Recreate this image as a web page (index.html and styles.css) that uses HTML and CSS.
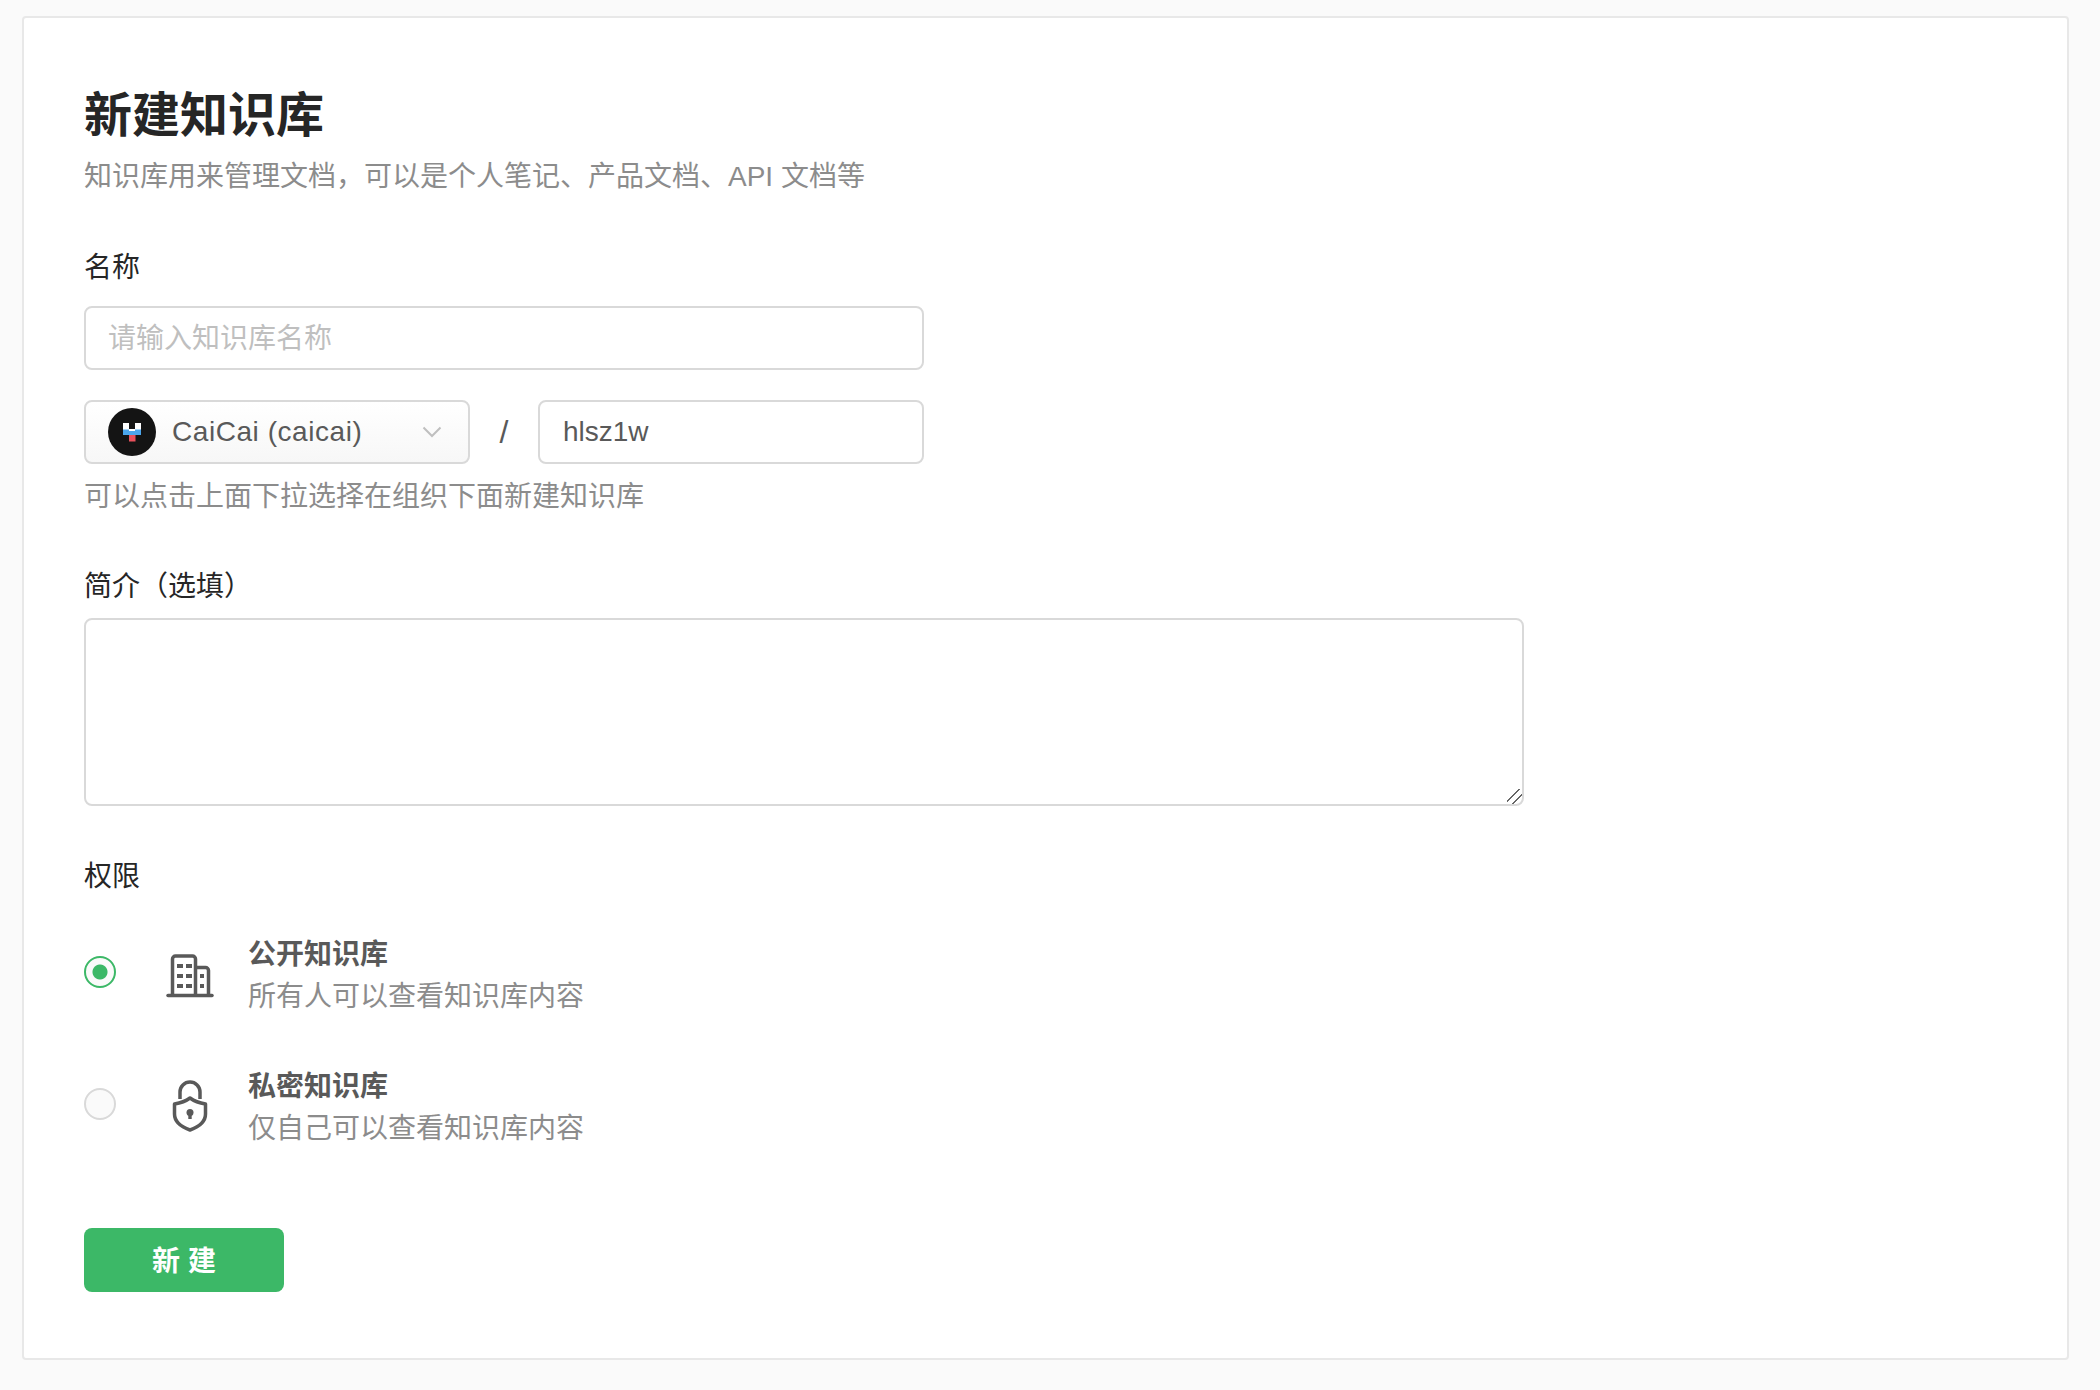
FILE: index.html
```html
<!DOCTYPE html>
<html lang="zh-CN">
<head>
    <meta charset="UTF-8">
    <title>新建知识库</title>
    <link rel="stylesheet" href="styles.css">
</head>
<body>
    <div class="card">
        <h1 class="title">新建知识库</h1>
        <p class="subtitle">知识库用来管理文档，可以是个人笔记、产品文档、API 文档等</p>

        <form class="form">
            <label class="label label-name" for="name">名称</label>
            <input class="input input-name" type="text" id="name" placeholder="请输入知识库名称">

            <div class="path-row">
                <div class="owner-select">
                    <span class="avatar">
                        <svg width="48" height="48" viewBox="0 0 48 48">
                            <circle cx="24" cy="24" r="24" fill="#141414"/>
                            <path d="M15 15h6v6h6v-6h6v8h-18z" fill="#fff"/>
                            <rect x="15" y="21.500" width="6" height="5.500" fill="#4ba6ec"/>
                            <rect x="21" y="23" width="6" height="4" fill="#4ba6ec"/>
                            <rect x="27" y="21.500" width="6" height="5.500" fill="#4ba6ec"/>
                            <rect x="21" y="27" width="6.500" height="6.500" fill="#e8505b"/>
                        </svg>
                    </span>
                    <span class="owner-name">CaiCai (caicai)</span>
                    <svg class="caret" width="20" height="12" viewBox="0 0 20 12">
                        <path d="M1.500 1.500 10 10l8.500-8.500" fill="none" stroke="#bfbfbf" stroke-width="2"/>
                    </svg>
                </div>
                <span class="slash">/</span>
                <input class="input input-slug" type="text" value="hlsz1w">
            </div>
            <p class="hint">可以点击上面下拉选择在组织下面新建知识库</p>

            <label class="label label-desc" for="desc">简介（选填）</label>
            <textarea class="textarea" id="desc"></textarea>

            <div class="label label-perm">权限</div>

            <div class="perm-row perm-public">
                <span class="radio radio-on"></span>
                <svg class="perm-icon icon-building" width="48" height="48" viewBox="0 0 48 48" fill="none" stroke="#595959" stroke-width="3.500">
                    <path d="M2 44.500h44" stroke-linecap="round"/>
                    <path d="M6.500 44V8a3 3 0 0 1 3-3h17a3 3 0 0 1 3 3v36"/>
                    <path d="M29.500 16.500h10a3 3 0 0 1 3 3V44"/>
                    <path d="M11 15h6M20 15h6M11 25h6M20 25h6M11 35h6M20 35h6M34 25h4M34 35h4" stroke-width="4"/>
                </svg>
                <div class="perm-text">
                    <div class="perm-title">公开知识库</div>
                    <div class="perm-desc">所有人可以查看知识库内容</div>
                </div>
            </div>

            <div class="perm-row perm-private">
                <span class="radio radio-off"></span>
                <svg class="perm-icon icon-lock" width="48" height="54" viewBox="0 0 48 54" fill="none" stroke="#595959" stroke-width="3.500">
                    <path d="M14 20v-7a10 10 0 0 1 20 0v7"/>
                    <path d="M24 19c4 3 9 5 15.500 6v10c0 8-7 13-15.500 16-8.500-3-15.500-8-15.500-16V25c6.500-1 11.500-3 15.500-6z" stroke-linejoin="round"/>
                    <circle cx="24" cy="33.500" r="3.500" fill="#595959" stroke="none"/>
                    <rect x="22.300" y="34" width="3.400" height="6" fill="#595959" stroke="none"/>
                </svg>
                <div class="perm-text">
                    <div class="perm-title">私密知识库</div>
                    <div class="perm-desc">仅自己可以查看知识库内容</div>
                </div>
            </div>

            <button class="submit" type="button">新 建</button>
        </form>
    </div>
</body>
</html>
```

FILE: styles.css
```css
* {
    box-sizing: border-box;
}
body {
    margin: 0;
    height: 1390px;
    padding: 16px 31px 30px 22px;
    background-color: #fafafa;
    font-family: "Liberation Sans", "Noto Sans CJK SC", sans-serif;
    color: #262626;
    overflow: hidden;
}
.card {
    height: 1344px;
    padding: 68px 60px 0;
    background-color: #fff;
    border: 2px solid #e8e8e8;
    border-radius: 4px;
}
.title {
    margin: 0;
    font-size: 48px;
    line-height: 60px;
    font-weight: 700;
    color: #262626;
}
.subtitle {
    margin: 11px 0 0;
    font-size: 28px;
    line-height: 40px;
    color: #8c8c8c;
}
.form {
    display: flex;
    flex-direction: column;
    align-items: flex-start;
}
.label {
    display: block;
    font-size: 28px;
    line-height: 40px;
    color: #262626;
}
.label-name {
    margin-top: 51px;
}
.label-desc {
    margin-top: 50px;
}
.label-perm {
    margin-top: 51px;
}
.input {
    height: 64px;
    padding: 0 23px;
    font-family: inherit;
    font-size: 28px;
    color: #595959;
    background-color: #fff;
    border: 2px solid #d9d9d9;
    border-radius: 8px;
    outline: none;
}
.input::placeholder {
    color: #bfbfbf;
}
.input-name {
    width: 840px;
    margin-top: 18px;
    padding: 2px 23px 0 22px;
}
.path-row {
    display: flex;
    align-items: center;
    width: 840px;
    margin-top: 30px;
}
.owner-select {
    display: flex;
    align-items: center;
    width: 386px;
    height: 64px;
    padding: 0 26px 0 22px;
    border: 2px solid #d9d9d9;
    border-radius: 8px;
    background: linear-gradient(#fff, #f7f7f7);
}
.avatar {
    display: flex;
    width: 48px;
    height: 48px;
}
.owner-name {
    flex: 1;
    margin-left: 16px;
    font-size: 28px;
    letter-spacing: 0.55px;
    color: #595959;
}
.slash {
    width: 68px;
    text-align: center;
    font-size: 32px;
    color: #595959;
}
.input-slug {
    width: 386px;
}
.hint {
    margin: 13px 0 0;
    font-size: 28px;
    line-height: 40px;
    color: #8c8c8c;
}
.textarea {
    display: block;
    width: 1440px;
    height: 188px;
    margin-top: 11px;
    padding: 12px 24px;
    font-family: inherit;
    font-size: 28px;
    background-color: #fff;
    border: 2px solid #d9d9d9;
    border-radius: 8px;
    outline: none;
    resize: both;
}
.textarea::-webkit-resizer {
    background: linear-gradient(135deg, transparent 0 37%, #666 37% 44%, transparent 44% 66%, #666 66% 73%, transparent 73%);
}
.perm-row {
    display: flex;
    align-items: center;
    height: 92px;
}
.perm-public {
    margin-top: 33px;
}
.perm-private {
    margin-top: 40px;
}
.radio {
    flex: none;
    width: 32px;
    height: 32px;
    margin-right: 50px;
    background-color: #fafafa;
    border: 2px solid #d9d9d9;
    border-radius: 50%;
}
.radio-on {
    margin-bottom: 9px;
    border-color: #3cb867;
    background: radial-gradient(circle, #3cb867 0 7px, #fafafa 8px);
}
.radio-off {
    margin-bottom: 8px;
}
.perm-icon {
    flex: none;
    margin-right: 34px;
}
.icon-building {
    margin-bottom: 2px;
}
.icon-lock {
    margin-bottom: 4px;
}
.perm-title {
    font-size: 28px;
    line-height: 42px;
    font-weight: 700;
    color: #595959;
}
.perm-desc {
    font-size: 28px;
    line-height: 42px;
    color: #8c8c8c;
}
.submit {
    width: 200px;
    height: 64px;
    margin-top: 74px;
    padding: 0 0 3px;
    font-family: inherit;
    font-size: 28px;
    font-weight: 700;
    color: #fff;
    background-color: #3cb867;
    border: none;
    border-radius: 8px;
}
```
